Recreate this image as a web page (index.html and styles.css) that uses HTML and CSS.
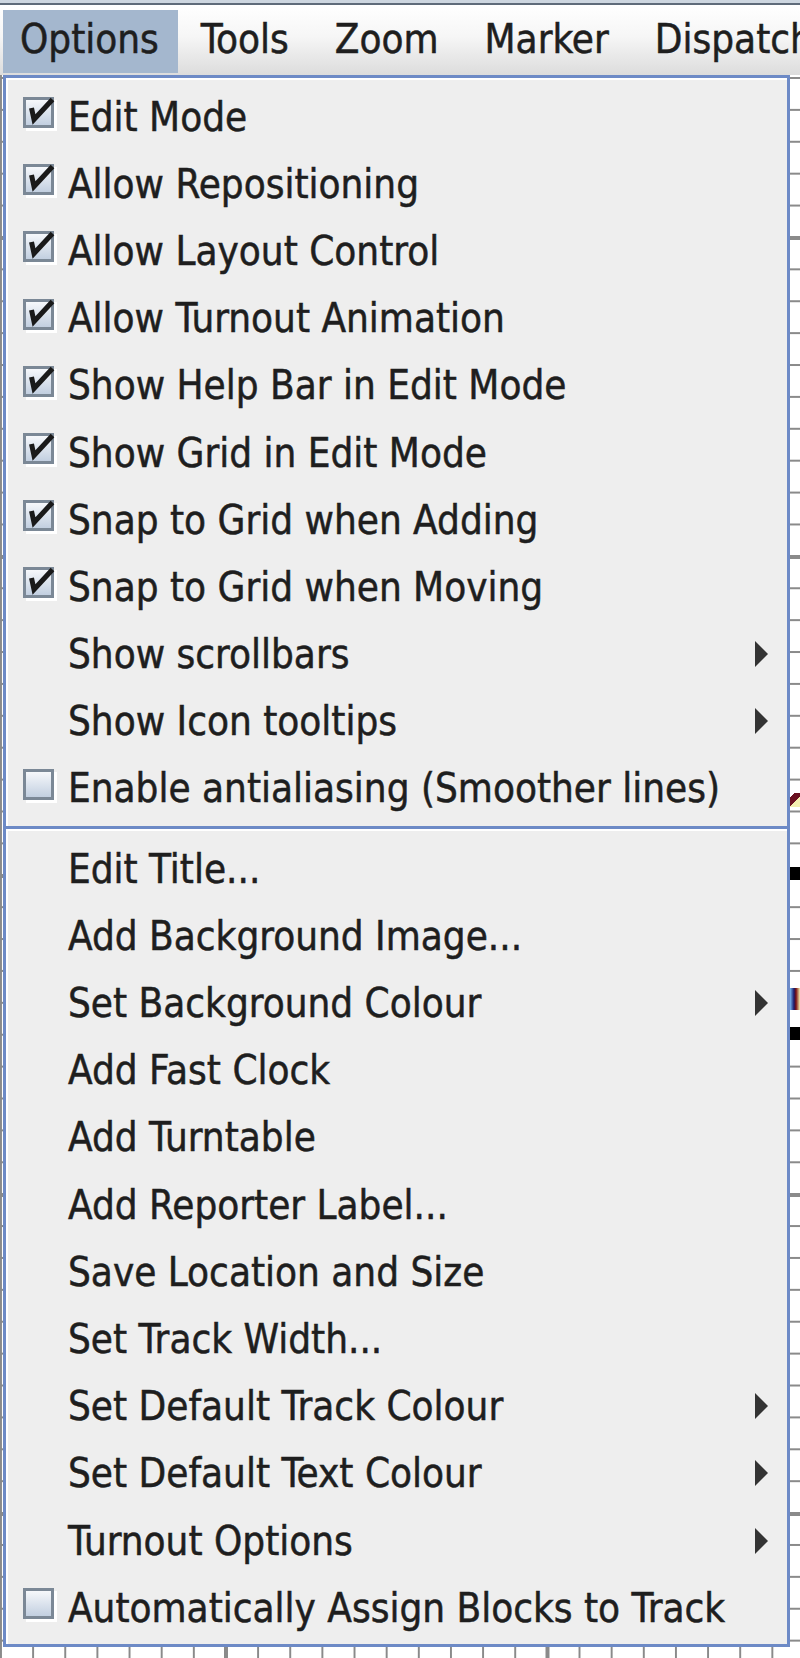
FILE: index.html
```html
<!DOCTYPE html>
<html lang="en">
<head>
    <meta charset="UTF-8">
    <title>Layout Editor - Options</title>
    <link rel="stylesheet" href="styles.css">
</head>
<body>
<div class="window">
    <div class="topline"></div>
    <div class="menubar">
        <span class="menu open">Options</span>
        <span class="menu">Tools</span>
        <span class="menu">Zoom</span>
        <span class="menu">Marker</span>
        <span class="menu">Dispatcher</span>
    </div>

    <!-- layout canvas behind the popup -->
    <div class="canvas">
        <span class="mark label1"></span>
        <span class="mark track1"></span>
        <span class="mark label2"></span>
        <span class="mark track2"></span>
    </div>

    <!-- Options popup -->
    <div class="popup">
        <div class="section">
            <div class="item"><span class="gutter"><span class="box"><svg class="tick" viewBox="0 0 31 31"><polyline points="8.5,11 11,22.5 29.5,2.5"/></svg></span></span><span class="label">Edit Mode</span></div>
            <div class="item"><span class="gutter"><span class="box"><svg class="tick" viewBox="0 0 31 31"><polyline points="8.5,11 11,22.5 29.5,2.5"/></svg></span></span><span class="label">Allow Repositioning</span></div>
            <div class="item"><span class="gutter"><span class="box"><svg class="tick" viewBox="0 0 31 31"><polyline points="8.5,11 11,22.5 29.5,2.5"/></svg></span></span><span class="label">Allow Layout Control</span></div>
            <div class="item"><span class="gutter"><span class="box"><svg class="tick" viewBox="0 0 31 31"><polyline points="8.5,11 11,22.5 29.5,2.5"/></svg></span></span><span class="label">Allow Turnout Animation</span></div>
            <div class="item"><span class="gutter"><span class="box"><svg class="tick" viewBox="0 0 31 31"><polyline points="8.5,11 11,22.5 29.5,2.5"/></svg></span></span><span class="label">Show Help Bar in Edit Mode</span></div>
            <div class="item"><span class="gutter"><span class="box"><svg class="tick" viewBox="0 0 31 31"><polyline points="8.5,11 11,22.5 29.5,2.5"/></svg></span></span><span class="label">Show Grid in Edit Mode</span></div>
            <div class="item"><span class="gutter"><span class="box"><svg class="tick" viewBox="0 0 31 31"><polyline points="8.5,11 11,22.5 29.5,2.5"/></svg></span></span><span class="label">Snap to Grid when Adding</span></div>
            <div class="item"><span class="gutter"><span class="box"><svg class="tick" viewBox="0 0 31 31"><polyline points="8.5,11 11,22.5 29.5,2.5"/></svg></span></span><span class="label">Snap to Grid when Moving</span></div>
            <div class="item"><span class="gutter"></span><span class="label">Show scrollbars</span><span class="arrow"></span></div>
            <div class="item"><span class="gutter"></span><span class="label">Show Icon tooltips</span><span class="arrow"></span></div>
            <div class="item"><span class="gutter"><span class="box"></span></span><span class="label">Enable antialiasing (Smoother lines)</span></div>
        </div>
        <div class="sep"></div>
        <div class="section">
            <div class="item"><span class="gutter"></span><span class="label">Edit Title...</span></div>
            <div class="item"><span class="gutter"></span><span class="label">Add Background Image...</span></div>
            <div class="item"><span class="gutter"></span><span class="label">Set Background Colour</span><span class="arrow"></span></div>
            <div class="item"><span class="gutter"></span><span class="label">Add Fast Clock</span></div>
            <div class="item"><span class="gutter"></span><span class="label">Add Turntable</span></div>
            <div class="item"><span class="gutter"></span><span class="label">Add Reporter Label...</span></div>
            <div class="item"><span class="gutter"></span><span class="label">Save Location and Size</span></div>
            <div class="item"><span class="gutter"></span><span class="label">Set Track Width...</span></div>
            <div class="item"><span class="gutter"></span><span class="label">Set Default Track Colour</span><span class="arrow"></span></div>
            <div class="item"><span class="gutter"></span><span class="label">Set Default Text Colour</span><span class="arrow"></span></div>
            <div class="item"><span class="gutter"></span><span class="label">Turnout Options</span><span class="arrow"></span></div>
            <div class="item"><span class="gutter"><span class="box"></span></span><span class="label">Automatically Assign Blocks to Track</span></div>
        </div>
    </div>
</div>
</body>
</html>
```

FILE: styles.css
```css
/* Page */
body {
  margin: 0;
  font-family: "DejaVu Sans Condensed", "Liberation Sans", sans-serif;
  font-size: 40px;
  color: #1e1e1e;
  -webkit-text-stroke: 0.5px #1e1e1e;
}

.window {
  position: relative;
  width: 800px;
  height: 1658px;
  overflow: hidden;
  background: #fff;
}

/* Title bar edge + menu bar */
.topline {
  height: 3px;
  background: #cdd6e0;
  border-bottom: 2px solid #5f6b7a;
}

.menubar {
  display: flex;
  height: 70px;
  box-sizing: border-box;
  padding: 5px 0 0 3px;
  background: linear-gradient(#ffffff, #f6f6f6 45%, #dcdcdc);
  white-space: nowrap;
}

.menu {
  height: 63px;
  line-height: 59px;
  padding: 0 23px;
}

.menu.open {
  background: #a4b7ce;
  padding: 0 19px 0 17px;
}

/* Layout canvas with grid */
.canvas {
  position: relative;
  height: 1583px;
  background-color: #fff;
  background-image:
    linear-gradient(to right, #8a8a8a 4px, transparent 4px),
    linear-gradient(to bottom, #8a8a8a 4px, transparent 4px),
    linear-gradient(to right, #8a8a8a 2px, transparent 2px),
    linear-gradient(to bottom, #8a8a8a 2px, transparent 2px);
  background-size: 321.5px 100%, 100% 319px, 32.15px 100%, 100% 31.9px;
  background-position: 224px 0, 0 161px, 32.15px 0, 0 2px;
}

.mark {
  position: absolute;
  left: 790px;
  width: 10px;
}

.track1 { top: 792px; height: 13px; background: #000; }
.track2 { top: 952px; height: 13px; background: #000; }
.label1 { top: 718px; height: 14px; background: linear-gradient(135deg, #fff 20%, #6a1020 20%, #6a1020 55%, #f4eeb0 55%); }
.label2 { top: 913px; height: 22px; background: linear-gradient(to right, #7ab8f0, #1a1a6a 40%, #7a1010 60%, #f4f0b0); }

/* Popup menu */
.popup {
  position: absolute;
  left: 3px;
  top: 75px;
  width: 787px;
  height: 1572px;
  box-sizing: border-box;
  padding: 5px 19px 0 0;
  border: 3px solid #6d8ac6;
  background: #eeeeee;
  box-shadow: inset 2px 2px 0 #fff;
}

.item {
  display: flex;
  align-items: center;
  height: 67.2px;
  padding-left: 17px;
  white-space: nowrap;
}

.gutter {
  flex: none;
  width: 45px;
  display: flex;
  align-items: center;
}

.box {
  position: relative;
  width: 31px;
  height: 31px;
  box-sizing: border-box;
  margin-bottom: 8px;
  border: 3px solid #7b8896;
  background: linear-gradient(#f6f8fb, #c2cfe0);
  box-shadow: 3px 3px 0 #fff;
}

.tick {
  position: absolute;
  left: -3px;
  top: -3px;
  width: 31px;
  height: 31px;
  overflow: visible;
}

.tick polyline {
  fill: none;
  stroke: #1a1a1a;
  stroke-width: 5;
  stroke-linejoin: miter;
}

.arrow {
  margin-left: auto;
  width: 0;
  height: 0;
  border-left: 13px solid #333;
  border-top: 13px solid transparent;
  border-bottom: 13px solid transparent;
}

.sep {
  height: 3px;
  margin: 4px -19px 4px 0;
  background: #6d8ac6;
  border-bottom: 2px solid #fff;
}
```
